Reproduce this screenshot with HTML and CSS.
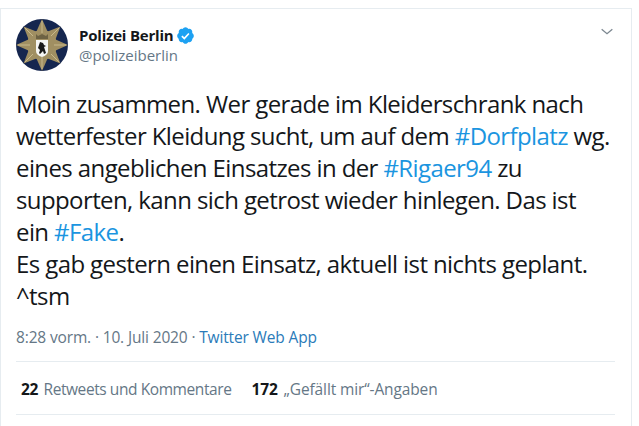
FILE: index.html
```html
<!DOCTYPE html>
<html lang="de">
<head>
<meta charset="utf-8">
<title>Polizei Berlin</title>
<link rel="stylesheet" href="styles.css">
</head>
<body>
<article class="card">
  <header class="head">
    <svg class="avatar" viewBox="0 0 52 52" aria-hidden="true">
      <circle cx="26" cy="26" r="26" fill="#15264f"/>
      <g class="star">
        <polygon points="26,0 34,18 18,18"/>
        <polygon points="26,0 34,18 18,18" transform="rotate(45 26 26)"/>
        <polygon points="26,0 34,18 18,18" transform="rotate(90 26 26)"/>
        <polygon points="26,0 34,18 18,18" transform="rotate(135 26 26)"/>
        <polygon points="26,0 34,18 18,18" transform="rotate(180 26 26)"/>
        <polygon points="26,0 34,18 18,18" transform="rotate(225 26 26)"/>
        <polygon points="26,0 34,18 18,18" transform="rotate(270 26 26)"/>
        <polygon points="26,0 34,18 18,18" transform="rotate(315 26 26)"/>
        <circle cx="26" cy="26" r="15"/>
      </g>
      <g class="ridge">
        <path d="M26 2v12M43 9l-8 8M50 26H38M43 43l-8-8M26 50V38M9 43l8-8M2 26h12M9 9l8 8"/>
      </g>
      <path d="M20 21h12v11q0 4-6 6-6-2-6-6z" fill="#f6f6f4"/>
      <path d="M24 23l3 1 1 2 2 1-2 1 1 3 1 3-2 1-1-3-3 3-1-1 1-3-2-2 1-3z" fill="#1a1a1a"/>
      <path d="M20 15l2 2 4-2 4 2 2-2v5H20z" fill="#6d6243"/>
    </svg>
    <div class="who">
      <div class="name-row">
        <span class="name">Polizei Berlin</span>
        <svg class="badge" viewBox="0 0 24 24" aria-hidden="true">
          <path fill="#1da1f2" d="M22.5 12.5c0-1.58-.875-2.95-2.148-3.6.154-.435.238-.905.238-1.4 0-2.21-1.71-3.998-3.818-3.998-.47 0-.92.084-1.336.25C14.818 2.415 13.51 1.5 12 1.5s-2.816.917-3.437 2.25c-.415-.165-.866-.25-1.336-.25-2.11 0-3.818 1.79-3.818 4 0 .494.083.964.237 1.4-1.272.65-2.147 2.018-2.147 3.6 0 1.495.782 2.798 1.942 3.486-.02.17-.032.34-.032.514 0 2.21 1.708 4 3.818 4 .47 0 .92-.086 1.335-.25.62 1.334 1.926 2.25 3.437 2.25 1.512 0 2.818-.916 3.437-2.25.415.163.865.248 1.336.248 2.11 0 3.818-1.79 3.818-4 0-.174-.012-.344-.033-.513 1.158-.687 1.943-1.99 1.943-3.484z"/>
          <path fill="#fff" d="M10.54 17.3 6.7 13.46l1.45-1.4 2.3 2.3 5.1-5.6 1.5 1.35z"/>
        </svg>
      </div>
      <div class="handle">@polizeiberlin</div>
    </div>
    <svg class="chevron" viewBox="0 0 24 24" aria-hidden="true">
      <path d="M4 8l8 6.5L20 8" fill="none" stroke="#7c8790" stroke-width="2"/>
    </svg>
  </header>
  <p class="text">Moin zusammen. Wer gerade im Kleiderschrank nach<br>wetterfester Kleidung sucht, um auf dem <a>#Dorfplatz</a> wg.<br>eines angeblichen Einsatzes in der <a>#Rigaer94</a> zu<br>supporten, kann sich getrost wieder hinlegen. Das ist<br>ein <a>#Fake</a>.<br>Es gab gestern einen Einsatz, aktuell ist nichts geplant.<br>^tsm</p>
  <div class="meta">8:28 vorm. · 10. Juli 2020 · <a>Twitter Web App</a></div>
  <div class="stats">
    <span class="stat stat-rt"><b>22</b> Retweets und Kommentare</span>
    <span class="stat stat-likes"><b>172</b> „Gefällt mir“-Angaben</span>
  </div>
</article>
</body>
</html>
```
FILE: styles.css
```css
html, body {
  margin: 0;
  padding: 0;
  background: #fff;
}
body {
  height: 426px;
  overflow: hidden;
  font-family: "Open Sans", "Noto Sans", sans-serif;
  color: #14171a;
}
.card {
  box-sizing: border-box;
  width: 632px;
  height: 426px;
  margin-top: 8px;
  padding: 10px 16px 0 15px;
  border-top: 1px solid #e6ecf0;
  border-left: 1px solid #e6ecf0;
  border-right: 1px solid #e6ecf0;
}
.head {
  display: flex;
  align-items: flex-start;
}
.avatar {
  width: 52px;
  height: 52px;
  flex: none;
}
.star { fill: #a08f62; }
.ridge path {
  fill: none;
  stroke: #c8b98c;
  stroke-width: 1;
}
.who {
  margin-left: 11px;
  flex: 1;
  padding-top: 6px;
}
.name-row {
  display: flex;
  align-items: center;
  gap: 3px;
  height: 20px;
}
.name {
  font-size: 15px;
  font-weight: 700;
  letter-spacing: -0.2px;
}
.badge {
  width: 19px;
  height: 19px;
}
.handle {
  font-size: 15px;
  color: #657786;
  line-height: 20px;
}
.chevron {
  width: 16px;
  height: 16px;
  margin: 5px 0 0;
}
.text {
  margin: 17px 0 0;
  font-size: 24px;
  line-height: 32px;
  letter-spacing: -0.6px;
  white-space: nowrap;
}
a { color: #2b7bb9; }
.text a { color: #1b95e0; }
.meta {
  margin-top: 15px;
  padding-bottom: 14px;
  font-size: 15.5px;
  line-height: 20px;
  color: #657786;
  letter-spacing: -0.15px;
  border-bottom: 1px solid #e6ecf0;
}
.stats {
  display: flex;
  gap: 20px;
  padding: 17px 5px 15px;
  font-size: 15.5px;
  line-height: 20px;
  color: #657786;
  border-bottom: 1px solid #e6ecf0;
}
.stat-rt { letter-spacing: -0.42px; }
.stat-likes { letter-spacing: -0.12px; }
.stat b {
  color: #14171a;
  margin-right: 2px;
}
```
